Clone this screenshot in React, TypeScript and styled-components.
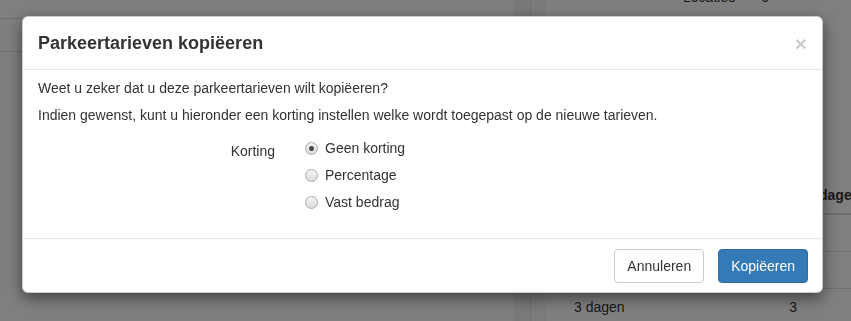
import React from "react";
import styled, { createGlobalStyle } from "styled-components";

const GlobalStyle = createGlobalStyle`
  html, body {
    margin: 0;
    padding: 0;
  }
  body {
    font-family: "Liberation Sans", Arial, sans-serif;
    font-size: 14px;
    line-height: 20px;
    color: #333;
    background: #fff;
    overflow: hidden;
  }
  * {
    box-sizing: border-box;
  }
`;

// page behind the backdrop
const Page = styled.div`
  display: flex;
  height: 321px;
  width: 851px;
  overflow: hidden;
`;

const LeftPanel = styled.div`
  flex: 0 0 514px;
  padding-top: 18px;
`;

const LeftRow = styled.div`
  height: 33px;
  border-top: 1px solid #ddd;
`;

const Gutter = styled.div`
  flex: 0 0 31px;
  display: flex;
  background: #f6f6f6;
`;

const GutterTrack = styled.div`
  width: 17px;
  background: #f2f2f2;
  border-right: 1px solid #e2e2e2;
`;

const RightPanel = styled.div`
  flex: 1;
  min-width: 0;
  padding-left: 29px;
  margin-top: -13px;
`;

const StatRow = styled.div`
  display: flex;
  justify-content: flex-end;
  gap: 26px;
  padding-right: 82px;
  height: 20px;
`;

const Table = styled.table`
  margin-top: 170px;
  border-collapse: collapse;
  table-layout: fixed;
  width: 320px;
`;

const Th = styled.th<{ $w?: number }>`
  width: ${(p) => (p.$w ? `${p.$w}px` : "auto")};
  text-align: left;
  font-weight: bold;
  padding: 8px 0 8px 14px;
  border-bottom: 2px solid #ddd;
  white-space: nowrap;
  overflow: hidden;
`;

const Td = styled.td<{ $right?: boolean }>`
  padding: 8px 8px 8px 0;
  height: 37px;
  border-top: 1px solid #ddd;
  text-align: ${(p) => (p.$right ? "right" : "left")};
`;

// modal
const Backdrop = styled.div`
  position: fixed;
  inset: 0;
  background: rgba(0, 0, 0, 0.5);
`;

const ModalLayer = styled.div`
  position: fixed;
  inset: 0;
  padding: 16px 0 0 22px;
`;

const ModalContent = styled.div`
  width: 801px;
  background: #fff;
  border: 1px solid rgba(0, 0, 0, 0.2);
  border-radius: 6px;
  box-shadow: 0 5px 15px rgba(0, 0, 0, 0.5);
`;

const ModalHeader = styled.div`
  display: flex;
  align-items: center;
  justify-content: space-between;
  padding: 15px;
  border-bottom: 1px solid #e5e5e5;
`;

const Title = styled.h4`
  margin: 0;
  font-size: 18px;
  line-height: 22px;
  font-weight: bold;
  color: #333;
`;

const Close = styled.button`
  border: 0;
  background: none;
  padding: 0;
  font-family: "Liberation Sans", Arial, sans-serif;
  font-size: 21px;
  font-weight: bold;
  line-height: 1;
  color: #000;
  opacity: 0.2;
  cursor: pointer;
`;

const ModalBody = styled.div`
  padding: 8px 15px 26px;
`;

const Text = styled.p`
  margin: 0 0 7px;
`;

const FormRow = styled.div`
  display: grid;
  grid-template-columns: 237px 1fr;
  column-gap: 30px;
  margin-top: 13px;
`;

const ControlLabel = styled.label`
  text-align: right;
  padding-top: 3px;
`;

const RadioList = styled.div`
  display: flex;
  flex-direction: column;
  gap: 7px;
`;

const RadioOption = styled.label`
  display: flex;
  align-items: center;
  gap: 7px;
  height: 20px;
  cursor: pointer;
`;

const RadioCircle = styled.span<{ $checked?: boolean }>`
  width: 13px;
  height: 13px;
  border-radius: 50%;
  border: 1px solid #a9a9a9;
  background: linear-gradient(#f4f4f4, #dcdcdc);
  display: flex;
  align-items: center;
  justify-content: center;

  &::after {
    content: "";
    width: 5px;
    height: 5px;
    border-radius: 50%;
    background: ${(p) => (p.$checked ? "#4a4a4a" : "transparent")};
  }
`;

const ModalFooter = styled.div`
  display: flex;
  justify-content: flex-end;
  gap: 14px;
  padding: 10px 14px 9px;
  border-top: 1px solid #e5e5e5;
`;

const Button = styled.button<{ $primary?: boolean }>`
  font-family: "Liberation Sans", Arial, sans-serif;
  font-size: 14px;
  line-height: 20px;
  height: 34px;
  padding: 6px 12px;
  border-radius: 4px;
  border: 1px solid ${(p) => (p.$primary ? "#2e6da4" : "#ccc")};
  background: ${(p) => (p.$primary ? "#337ab7" : "#fff")};
  color: ${(p) => (p.$primary ? "#fff" : "#333")};
  cursor: pointer;
`;

const options = ["Geen korting", "Percentage", "Vast bedrag"];

export default function App() {
  return (
    <>
      <GlobalStyle />
      <Page>
        <LeftPanel>
          <LeftRow />
          <LeftRow />
        </LeftPanel>
        <Gutter>
          <GutterTrack />
        </Gutter>
        <RightPanel>
          <StatRow>
            <span>Locaties</span>
            <span>0</span>
          </StatRow>
          <Table>
            <thead>
              <tr>
                <Th $w={200}></Th>
                <Th $w={31}></Th>
                <Th>dagen</Th>
              </tr>
            </thead>
            <tbody>
              <tr>
                <Td />
                <Td />
                <Td />
              </tr>
              <tr>
                <Td />
                <Td />
                <Td />
              </tr>
              <tr>
                <Td>3 dagen</Td>
                <Td $right>3</Td>
                <Td />
              </tr>
            </tbody>
          </Table>
        </RightPanel>
      </Page>
      <Backdrop />
      <ModalLayer>
        <ModalContent>
          <ModalHeader>
            <Title>Parkeertarieven kopiëeren</Title>
            <Close type="button">×</Close>
          </ModalHeader>
          <ModalBody>
            <Text>Weet u zeker dat u deze parkeertarieven wilt kopiëeren?</Text>
            <Text>
              Indien gewenst, kunt u hieronder een korting instellen welke wordt
              toegepast op de nieuwe tarieven.
            </Text>
            <FormRow>
              <ControlLabel>Korting</ControlLabel>
              <RadioList>
                {options.map((o, i) => (
                  <RadioOption key={o}>
                    <RadioCircle $checked={i === 0} />
                    {o}
                  </RadioOption>
                ))}
              </RadioList>
            </FormRow>
          </ModalBody>
          <ModalFooter>
            <Button type="button">Annuleren</Button>
            <Button type="button" $primary>
              Kopiëeren
            </Button>
          </ModalFooter>
        </ModalContent>
      </ModalLayer>
    </>
  );
}
